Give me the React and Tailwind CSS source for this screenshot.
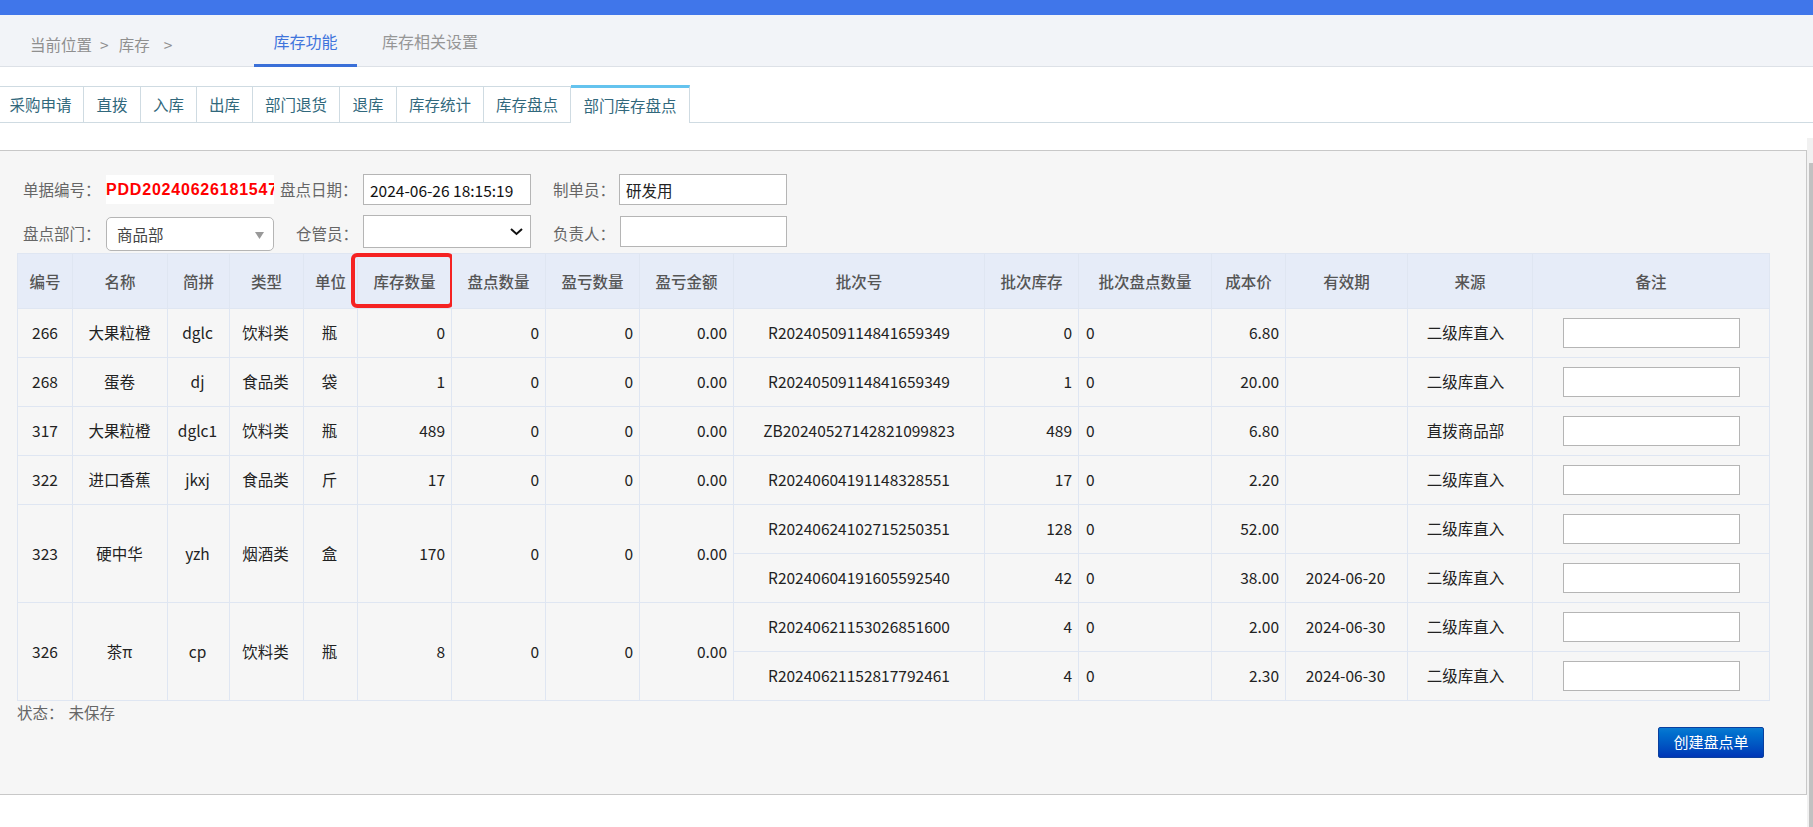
import React from "react";

const FONT = "font-['Noto_Sans_CJK_SC','Noto_Sans',sans-serif]";

const TABS = [
  { name: "采购申请", w: "w-[84px] pr-[2px]" },
  { name: "直拨", w: "w-[57px]" },
  { name: "入库", w: "w-[56px]" },
  { name: "出库", w: "w-[56px]" },
  { name: "部门退货", w: "w-[87px]" },
  { name: "退库", w: "w-[57px]" },
  { name: "库存统计", w: "w-[87px]" },
  { name: "库存盘点", w: "w-[87px]" },
];

const HEADS = ["编号", "名称", "简拼", "类型", "单位", "库存数量", "盘点数量", "盈亏数量", "盈亏金额", "批次号", "批次库存", "批次盘点数量", "成本价", "有效期", "来源", "备注"];

const ROWS = [
  { id: 266, name: "大果粒橙", py: "dglc", type: "饮料类", unit: "瓶", stock: 0, batches: [["R20240509114841659349", 0, "6.80", "", "二级库直入"]] },
  { id: 268, name: "蛋卷", py: "dj", type: "食品类", unit: "袋", stock: 1, batches: [["R20240509114841659349", 1, "20.00", "", "二级库直入"]] },
  { id: 317, name: "大果粒橙", py: "dglc1", type: "饮料类", unit: "瓶", stock: 489, batches: [["ZB20240527142821099823", 489, "6.80", "", "直拨商品部"]] },
  { id: 322, name: "进口香蕉", py: "jkxj", type: "食品类", unit: "斤", stock: 17, batches: [["R20240604191148328551", 17, "2.20", "", "二级库直入"]] },
  {
    id: 323, name: "硬中华", py: "yzh", type: "烟酒类", unit: "盒", stock: 170,
    batches: [
      ["R20240624102715250351", 128, "52.00", "", "二级库直入"],
      ["R20240604191605592540", 42, "38.00", "2024-06-20", "二级库直入"],
    ],
  },
  {
    id: 326, name: "茶π", py: "cp", type: "饮料类", unit: "瓶", stock: 8,
    batches: [
      ["R20240621153026851600", 4, "2.00", "2024-06-30", "二级库直入"],
      ["R20240621152817792461", 4, "2.30", "2024-06-30", "二级库直入"],
    ],
  },
];

const td = "border border-[#dfe6f2] h-[49px] p-0 font-normal text-[#222]";

function Label({ w, children }) {
  return <div className={`${w} shrink-0 text-[#666] whitespace-nowrap`}>{children}</div>;
}

export default function App() {
  return (
    <div className={`${FONT} h-[827px] overflow-hidden bg-white text-[15.5px]`}>
      {/* top bar */}
      <div className="h-[15px] bg-[#4076ea]" />

      {/* header */}
      <div className="h-[52px] bg-[#f2f4f8] border-b border-[#dde1e7] flex">
        <div className="w-[254px] shrink-0 pl-[30px] pt-[18px] text-[#8f8f8f] flex">
          <span>当前位置</span>
          <span className="ml-[8px]">&gt;</span>
          <span className="ml-[10px]">库存</span>
          <span className="ml-[14px]">&gt;</span>
        </div>
        <div className="w-[103px] h-[52px] border-b-[3px] border-[#3a6fd8] text-center pt-[14px] text-[#3f74dc] text-[16px]">库存功能</div>
        <div className="pl-[25px] pt-[14px] text-[#969696] text-[16px]">库存相关设置</div>
      </div>

      {/* tabs */}
      <div className="mt-[18px] h-[38px] border-b border-[#cfdbe2] flex items-start">
        {TABS.map((t) => (
          <div key={t.name} className={`${t.w} h-[37px] mt-[1px] border-t border-r border-[#cfdbe2] flex items-center justify-center text-[#31687c]`}>{t.name}</div>
        ))}
        <div className="w-[119px] h-[38px] border-t-[3px] border-t-[#64c3ee] border-r border-r-[#cfdbe2] bg-white flex items-center justify-center pt-[1px] text-[#31687c]">部门库存盘点</div>
      </div>

      <div className="flex items-start">
        <div className="flex-1 min-w-0 mt-[27px]">
          {/* panel */}
          <div className="w-[1807px] h-[645px] bg-[#f6f6f6] border-t border-b border-r border-[#c8c8c8] pt-[23px]">
            <div className="flex items-center h-[31px] pl-[23px]">
              <Label w="w-[83px]">单据编号：</Label>
              <div className="w-[168px] h-[29px] bg-white overflow-hidden whitespace-nowrap font-['Liberation_Sans',sans-serif] font-bold text-[16px] tracking-[0.8px] leading-[29px] text-[#ff0000]">PDD20240626181547</div>
              <Label w="w-[89px] pl-[6px]">盘点日期：</Label>
              <input readOnly value="2024-06-26 18:15:19" className="w-[168px] h-[31px] bg-white border border-[#b5b5b5] px-[6px] text-[#111] outline-none" />
              <Label w="w-[66px] ml-[22px]">制单员：</Label>
              <input readOnly value="研发用" className="w-[168px] h-[31px] bg-white border border-[#b5b5b5] px-[6px] text-[#222] outline-none" />
            </div>
            <div className="flex items-start h-[36px] mt-[10px] pl-[23px]">
              <Label w="w-[83px] pt-[7px]">盘点部门：</Label>
              <div className="w-[168px] h-[34px] mt-[2px] bg-white border border-[#b5b5b5] rounded-[5px] flex items-center justify-between pl-[10px] pr-[9px] pt-[2px] text-[#444]">
                <span>商品部</span>
                <svg width="9" height="7" viewBox="0 0 9 7"><polygon points="0,0 9,0 4.5,7" fill="#999999" /></svg>
              </div>
              <Label w="w-[89px] pl-[22px] pt-[7px]">仓管员：</Label>
              <div className="relative w-[168px] h-[33px] shrink-0">
                <select className="block w-full h-full appearance-none bg-white border border-[#b5b5b5] text-[#222]"><option></option></select>
                <svg className="absolute right-[8px] top-[13px] pointer-events-none" width="13" height="8" viewBox="0 0 13 8">
                  <polyline points="1,1 6.5,6 12,1" fill="none" stroke="#111111" strokeWidth="2" />
                </svg>
              </div>
              <Label w="w-[66px] ml-[22px] pt-[7px]">负责人：</Label>
              <input readOnly className="w-[167px] h-[31px] mt-[1px] ml-[1px] bg-white border border-[#b5b5b5] outline-none" />
            </div>

            {/* table */}
            <div className="ml-[17px] mt-[2px] w-[1752px]">
              <table className="w-[1752px] table-fixed border-collapse text-center">
                <colgroup>
                  <col className="w-[55px]" />
                  <col className="w-[95px]" />
                  <col className="w-[62px]" />
                  <col className="w-[74px]" />
                  <col className="w-[54px]" />
                  <col className="w-[94px]" />
                  <col className="w-[94px]" />
                  <col className="w-[94px]" />
                  <col className="w-[94px]" />
                  <col className="w-[251px]" />
                  <col className="w-[94px]" />
                  <col className="w-[133px]" />
                  <col className="w-[74px]" />
                  <col className="w-[122px]" />
                  <col className="w-[125px]" />
                  <col className="w-[237px]" />
                </colgroup>
                <thead>
                  <tr>
                    {HEADS.map((h, i) => (
                      <th key={h} className="relative h-[55px] p-0 pt-[2px] border border-[#dfe6f2] bg-[#e6ecf8] font-medium text-[#555] whitespace-nowrap">
                        {h}
                        {i === 5 && <span className="absolute -left-[7px] -top-[1px] w-[103px] h-[54.5px] border-4 border-[#f52222] rounded-[6px]" />}
                      </th>
                    ))}
                  </tr>
                </thead>
                <tbody>
                  {ROWS.flatMap((r) =>
                    r.batches.map((b, i) => (
                      <tr key={r.id + "-" + i}>
                        {i === 0 && (
                          <>
                            <td rowSpan={r.batches.length} className={td}>{r.id}</td>
                            <td rowSpan={r.batches.length} className={`${td} pr-[1px]`}>{r.name}</td>
                            <td rowSpan={r.batches.length} className={`${td} pr-[2px]`}>{r.py}</td>
                            <td rowSpan={r.batches.length} className={`${td} pr-[2px]`}>{r.type}</td>
                            <td rowSpan={r.batches.length} className={`${td} pr-[2px]`}>{r.unit}</td>
                            <td rowSpan={r.batches.length} className={`${td} text-right pr-[6px]`}>{r.stock}</td>
                            <td rowSpan={r.batches.length} className={`${td} text-right pr-[6px]`}>0</td>
                            <td rowSpan={r.batches.length} className={`${td} text-right pr-[6px]`}>0</td>
                            <td rowSpan={r.batches.length} className={`${td} text-right pr-[6px]`}>0.00</td>
                          </>
                        )}
                        <td className={td}>{b[0]}</td>
                        <td className={`${td} text-right pr-[6px]`}>{b[1]}</td>
                        <td className={`${td} text-left pl-[7px]`}>0</td>
                        <td className={`${td} text-right pr-[6px]`}>{b[2]}</td>
                        <td className={`${td} pr-[2px]`}>{b[3]}</td>
                        <td className={`${td} pr-[9px]`}>{b[4]}</td>
                        <td className={td}>
                          <input className="block mx-auto w-[177px] h-[30px] bg-white border border-[#b5b5b5] outline-none" />
                        </td>
                      </tr>
                    ))
                  )}
                </tbody>
              </table>
            </div>

            <div className="pl-[17px] h-[22px] leading-[22px] text-[15.5px] text-[#666] flex">
              <span>状态：</span>
              <span className="ml-[5px]">未保存</span>
            </div>
            <div className="flex justify-end pr-[42px] mt-[4px]">
              <button className="w-[106px] h-[31px] rounded-[2px] border border-[#0a3f9e] bg-gradient-to-b from-[#0a7ad2] to-[#0036b6] text-white text-[15px]">创建盘点单</button>
            </div>
          </div>
        </div>
        {/* scrollbar */}
        <div className="w-[6px] shrink-0 mt-[15px] h-[689px] flex flex-col bg-[#f1f1f1]">
          <div className="h-[25px]" />
          <div className="flex-1 ml-[2px] bg-[#c1c1c1]" />
        </div>
      </div>
    </div>
  );
}
